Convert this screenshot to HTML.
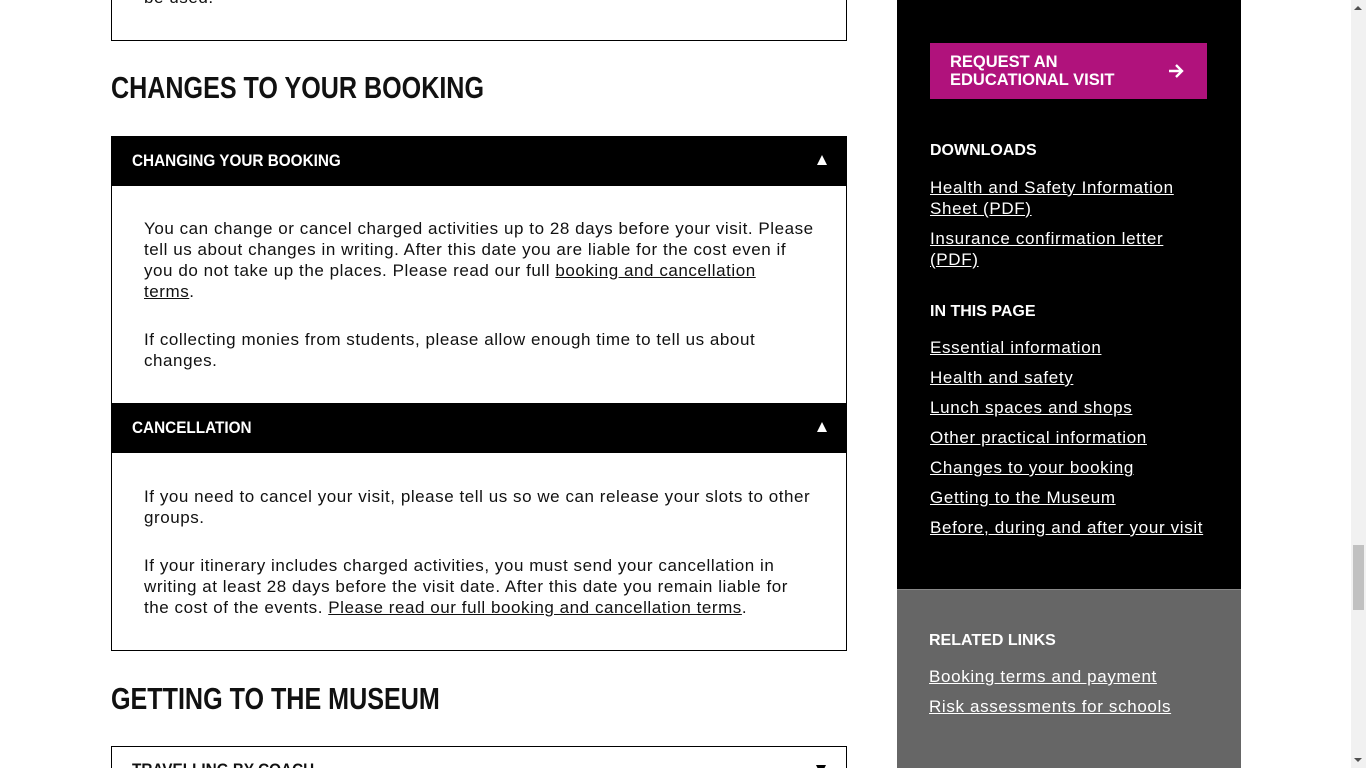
<!DOCTYPE html>
<html><head><style>
*{margin:0;padding:0;box-sizing:border-box}
html,body{width:1366px;height:768px;overflow:hidden}
body{background:#fff;position:relative;font-family:"Liberation Sans",sans-serif;color:#111}
.abs{position:absolute}
.h2{font-weight:bold;font-size:31px;transform:scaleX(0.81);transform-origin:0 0;white-space:nowrap}
.box{border:1px solid #000}
.bar{background:#000;color:#fff}
.bt{position:absolute;left:21px;top:15px;font-weight:bold;font-size:17px;transform:scaleX(0.9);transform-origin:0 0;white-space:nowrap}
.p{font-size:17px;line-height:21px;white-space:nowrap;letter-spacing:0.55px}
.p a,.side a{color:inherit;text-decoration:underline}
.side{color:#fff;font-size:17px;line-height:21px;letter-spacing:0.65px;white-space:nowrap}
.sh{font-weight:bold;font-size:16px;color:#fff}
.tri{position:absolute;right:20px;top:19px;width:0;height:0;border-left:5px solid transparent;border-right:5px solid transparent;border-bottom:10px solid #fff}
</style></head><body>
<div class="abs box" style="left:111px;top:-2px;width:736px;height:43px;border-top:none"></div>
<div class="abs p" style="left:144px;top:-13px">be used.</div>
<div class="abs h2" style="left:111px;top:70px">CHANGES TO YOUR BOOKING</div>

<div class="abs box" style="left:111px;top:136px;width:736px;height:515px"></div>
<div class="abs bar" style="left:111px;top:136px;width:736px;height:50px"><span class="bt">CHANGING YOUR BOOKING</span><div class="tri"></div></div>
<div class="abs p" style="left:144px;top:218px">You can change or cancel charged activities up to 28 days before your visit. Please<br>tell us about changes in writing. After this date you are liable for the cost even if<br>you do not take up the places. Please read our full <a>booking and cancellation</a><br><a>terms</a>.</div>
<div class="abs p" style="left:144px;top:329px">If collecting monies from students, please allow enough time to tell us about<br>changes.</div>
<div class="abs bar" style="left:111px;top:403px;width:736px;height:50px"><span class="bt">CANCELLATION</span><div class="tri"></div></div>
<div class="abs p" style="left:144px;top:486px">If you need to cancel your visit, please tell us so we can release your slots to other<br>groups.</div>
<div class="abs p" style="left:144px;top:555px">If your itinerary includes charged activities, you must send your cancellation in<br>writing at least 28 days before the visit date. After this date you remain liable for<br>the cost of the events. <a>Please read our full booking and cancellation terms</a>.</div>

<div class="abs h2" style="left:111px;top:681px">GETTING TO THE MUSEUM</div>
<div class="abs box" style="left:111px;top:746px;width:736px;height:40px"></div>
<div class="abs" style="left:132px;top:760px;font-weight:bold;font-size:17px;transform:scaleX(0.9);transform-origin:0 0">TRAVELLING BY COACH</div>
<div class="abs" style="left:816px;top:765px;border-left:5px solid transparent;border-right:5px solid transparent;border-top:10px solid #000"></div>

<div class="abs" style="left:897px;top:0;width:344px;height:589px;background:#000"></div>
<div class="abs" style="left:897px;top:589px;width:344px;height:179px;background:#666;border-top:1px solid #888"></div>
<div class="abs" style="left:930px;top:43px;width:277px;height:56px;background:#b0127c;color:#fff;font-weight:bold;font-size:16.5px;line-height:18px;padding:10px 0 0 20px">REQUEST AN<br>EDUCATIONAL VISIT
<svg class="abs" style="left:238px;top:20px" width="16" height="16" viewBox="0 0 16 16"><path d="M1 8H14M8 2L14 8L8 14" stroke="#fff" stroke-width="2.4" fill="none"/></svg></div>
<div class="abs sh" style="left:930px;top:142px">DOWNLOADS</div>
<div class="abs side" style="left:930px;top:177px"><a>Health and Safety Information</a><br><a>Sheet (PDF)</a></div>
<div class="abs side" style="left:930px;top:228px"><a>Insurance confirmation letter</a><br><a>(PDF)</a></div>
<div class="abs sh" style="left:930px;top:303px">IN THIS PAGE</div>
<div class="abs side" style="left:930px;top:333px;line-height:30px"><a>Essential information</a><br><a>Health and safety</a><br><a>Lunch spaces and shops</a><br><a>Other practical information</a><br><a>Changes to your booking</a><br><a>Getting to the Museum</a><br><a>Before, during and after your visit</a></div>
<div class="abs sh" style="left:929px;top:632px">RELATED LINKS</div>
<div class="abs side" style="left:929px;top:662px;line-height:30px"><a>Booking terms and payment</a><br><a>Risk assessments for schools</a></div>

<div class="abs" style="left:1351px;top:0;width:15px;height:768px;background:#f1f1f1"></div>
<div class="abs" style="left:1353px;top:545px;width:11px;height:65px;background:#c1c1c1"></div>
<div class="abs" style="left:1354px;top:6px;border-left:4px solid transparent;border-right:4px solid transparent;border-bottom:4px solid #505050"></div>
<div class="abs" style="left:1354px;top:758px;border-left:4px solid transparent;border-right:4px solid transparent;border-top:4px solid #505050"></div>
</body></html>
